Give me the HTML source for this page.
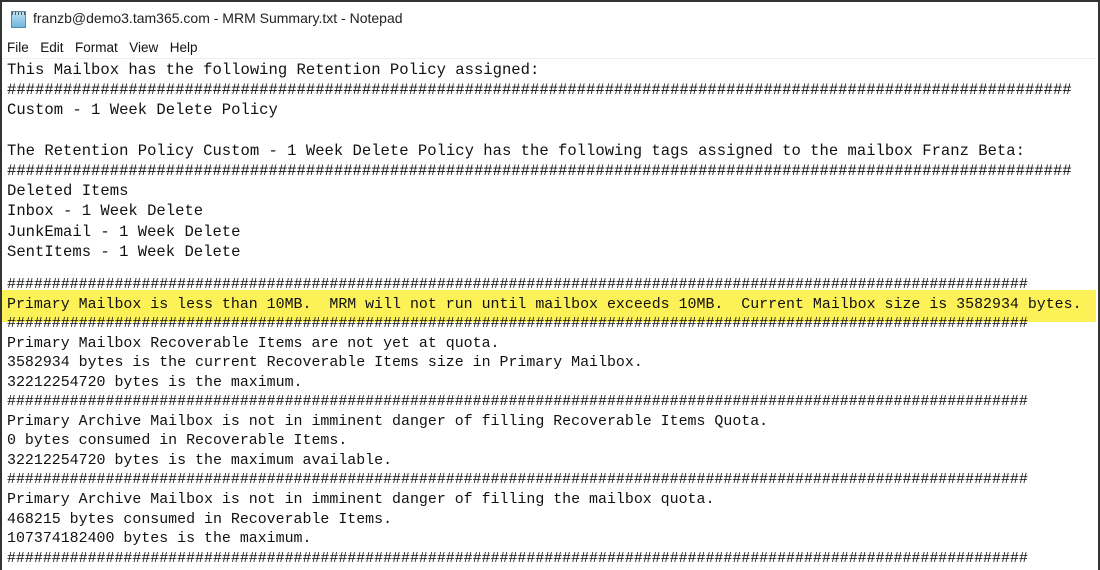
<!DOCTYPE html>
<html><head><style>
html,body{margin:0;padding:0}
body{width:1100px;height:570px;overflow:hidden;background:#fff;position:relative;font-family:"Liberation Sans",sans-serif}
.frame{position:absolute;left:0;top:0;height:570px;border:2px solid #333;border-bottom:none;box-sizing:border-box;width:1100px}
.title{position:absolute;left:33px;top:10px;font-size:14px;color:#222}
.icon{position:absolute;left:11px;top:11px;width:13px;height:15px;background:linear-gradient(#bfe3f5,#6fb6dc);border:1px solid #5a8aa8}
.icon:before{content:"";position:absolute;left:0;right:0;top:0;height:3px;background:repeating-linear-gradient(90deg,#555 0 1px,transparent 1px 3px)}
.menu{position:absolute;left:7px;top:40px;font-size:13.5px;color:#111;word-spacing:2px}
.sep{position:absolute;left:2px;right:4px;top:58px;height:1px;background:#eee}
pre{margin:0;position:absolute;left:7px;font-family:"Liberation Mono",monospace;color:#111;white-space:pre}
.a{top:60px;font-size:15.57px;line-height:20.2px}
.b{top:276px;font-size:14.93px;line-height:19.55px}
.hl{position:absolute;left:2px;width:1094px;top:290px;height:32px;background:#fcf157}
</style></head><body>
<div class="frame"></div>
<div class="icon"></div>
<div class="title">franzb@demo3.tam365.com - MRM Summary.txt - Notepad</div>
<div class="menu">File&nbsp; Edit&nbsp; Format&nbsp; View&nbsp; Help</div>
<div class="sep"></div>
<div class="hl"></div>
<pre class="a">This Mailbox has the following Retention Policy assigned:
##################################################################################################################
Custom - 1 Week Delete Policy

The Retention Policy Custom - 1 Week Delete Policy has the following tags assigned to the mailbox Franz Beta:
##################################################################################################################
Deleted Items
Inbox - 1 Week Delete
JunkEmail - 1 Week Delete
SentItems - 1 Week Delete</pre>
<pre class="b">##################################################################################################################
Primary Mailbox is less than 10MB.  MRM will not run until mailbox exceeds 10MB.  Current Mailbox size is 3582934 bytes.
##################################################################################################################
Primary Mailbox Recoverable Items are not yet at quota.
3582934 bytes is the current Recoverable Items size in Primary Mailbox.
32212254720 bytes is the maximum.
##################################################################################################################
Primary Archive Mailbox is not in imminent danger of filling Recoverable Items Quota.
0 bytes consumed in Recoverable Items.
32212254720 bytes is the maximum available.
##################################################################################################################
Primary Archive Mailbox is not in imminent danger of filling the mailbox quota.
468215 bytes consumed in Recoverable Items.
107374182400 bytes is the maximum.
##################################################################################################################</pre>
</body></html>
